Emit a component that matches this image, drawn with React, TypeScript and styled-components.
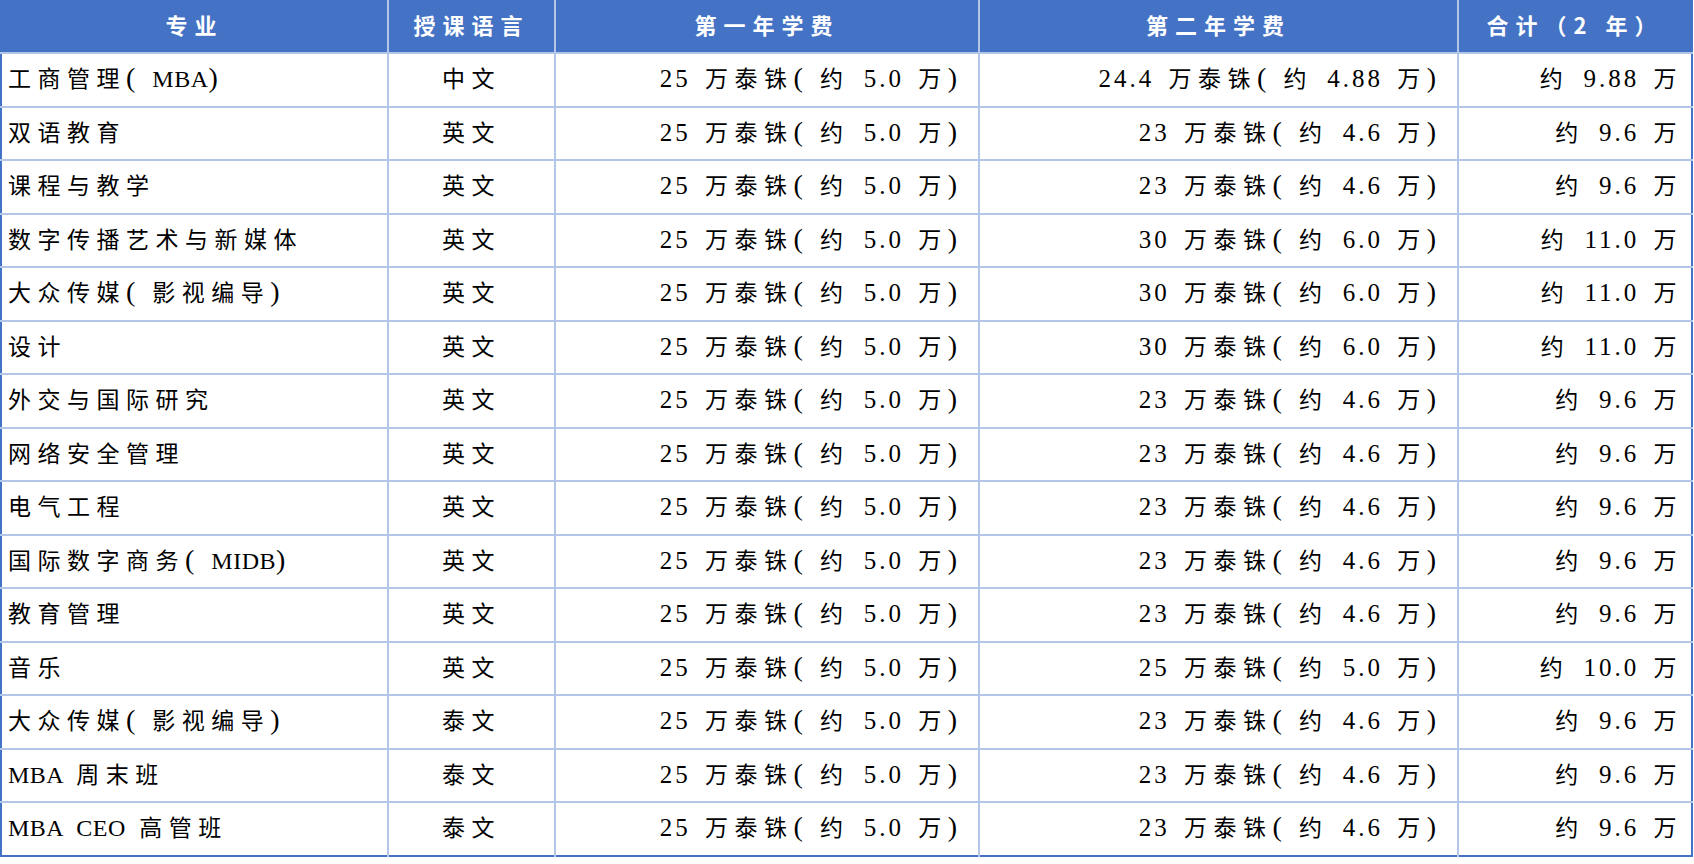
import React from "react";
import styled, { createGlobalStyle } from "styled-components";

const GlobalStyle = createGlobalStyle`
  html, body {
    margin: 0;
    padding: 0;
    background: #ffffff;
  }
  body {
    font-family: "Liberation Serif", "Noto Sans CJK SC", serif;
  }
`;

const Page = styled.div`
  width: 1694px;
  height: 864px;
  background: #ffffff;
`;

const Table = styled.table`
  width: 1691px;
  table-layout: fixed;
  border-collapse: collapse;
  border-left: 2px solid #4472c4;
  border-bottom: 2px solid #4472c4;
  border-right: 2px solid #4472c4;
`;

const HeadRow = styled.tr`
  height: 53px;
`;

const HeadCell = styled.th`
  padding: 0 0 4px 0;
  background: #4472c4;
  color: #ffffff;
  font-family: "Noto Sans CJK SC", sans-serif;
  font-weight: 700;
  font-size: 22px;
  letter-spacing: 7px;
  text-align: center;
  vertical-align: middle;
  border-left: 2px solid #b4c6e7;
  &:first-child {
    border-left: none;
  }
`;

const Row = styled.tr`
  height: 53.5px;
`;

type Align = "left" | "center" | "right";

const Cell = styled.td<{ $align: Align; $padRight: number }>`
  padding: 0 ${(p) => p.$padRight}px 5px
    ${(p) => (p.$align === "left" ? "6px" : "0")};
  border-top: 2px solid #b4c6e7;
  border-left: 2px solid #b4c6e7;
  color: #000000;
  font-family: "Liberation Serif", "Noto Sans CJK SC", serif;
  font-size: 23px;
  letter-spacing: 6.5px;
  text-align: ${(p) => p.$align};
  vertical-align: middle;
  white-space: nowrap;
  &:first-child {
    border-left: none;
  }
`;

/* Latin runs (digits, letters): taller glyphs, tighter spacing than the CJK characters */
const Latin = styled.span`
  font-size: 25px;
  letter-spacing: 3px;
  word-spacing: 5px;
`;

/* capital-letter abbreviations are set narrower in the source */
const Caps = styled.span`
  font-size: 24px;
  letter-spacing: 0.5px;
  word-spacing: 7px;
`;

/* thin, tall brackets like the source document's full-width ones */
const Paren = styled.span`
  font-size: 28px;
  letter-spacing: 3px;
  word-spacing: 4px;
`;

const columns: { title: string; width: number; align: Align; padRight: number }[] = [
  { title: "专业", width: 387, align: "left", padRight: 0 },
  { title: "授课语言", width: 167, align: "center", padRight: 0 },
  { title: "第一年学费", width: 424, align: "right", padRight: 18 },
  { title: "第二年学费", width: 479, align: "right", padRight: 18 },
  { title: "合计（2 年）", width: 234, align: "right", padRight: 8 },
];

const Y1 = "25 万泰铢( 约 5.0 万)";
const A = "23 万泰铢( 约 4.6 万)";
const B = "30 万泰铢( 约 6.0 万)";

const rows: string[][] = [
  ["工商管理( MBA)", "中文", Y1, "24.4 万泰铢( 约 4.88 万)", "约 9.88 万"],
  ["双语教育", "英文", Y1, A, "约 9.6 万"],
  ["课程与教学", "英文", Y1, A, "约 9.6 万"],
  ["数字传播艺术与新媒体", "英文", Y1, B, "约 11.0 万"],
  ["大众传媒( 影视编导)", "英文", Y1, B, "约 11.0 万"],
  ["设计", "英文", Y1, B, "约 11.0 万"],
  ["外交与国际研究", "英文", Y1, A, "约 9.6 万"],
  ["网络安全管理", "英文", Y1, A, "约 9.6 万"],
  ["电气工程", "英文", Y1, A, "约 9.6 万"],
  ["国际数字商务( MIDB)", "英文", Y1, A, "约 9.6 万"],
  ["教育管理", "英文", Y1, A, "约 9.6 万"],
  ["音乐", "英文", Y1, "25 万泰铢( 约 5.0 万)", "约 10.0 万"],
  ["大众传媒( 影视编导)", "泰文", Y1, A, "约 9.6 万"],
  ["MBA 周末班", "泰文", Y1, A, "约 9.6 万"],
  ["MBA CEO 高管班", "泰文", Y1, A, "约 9.6 万"],
];

type Kind = "cjk" | "latin" | "caps" | "paren";

const kindOf = (ch: string): Kind => {
  if (ch === "(" || ch === ")") return "paren";
  if (/[A-Z]/.test(ch)) return "caps";
  return ch.charCodeAt(0) < 0x2e80 ? "latin" : "cjk";
};

const splitRuns = (text: string) => {
  const runs: { kind: Kind; text: string }[] = [];
  for (const ch of text) {
    let kind = kindOf(ch);
    const last = runs[runs.length - 1];
    // a space stays with the bracket or abbreviation before it
    if (ch === " " && last && (last.kind === "paren" || last.kind === "caps")) kind = last.kind;
    if (last && last.kind === kind) last.text += ch;
    else runs.push({ kind, text: ch });
  }
  return runs;
};

const Mixed = ({ text }: { text: string }) => (
  <>
    {splitRuns(text).map((r, i) => {
      if (r.kind === "latin") return <Latin key={i}>{r.text}</Latin>;
      if (r.kind === "caps") return <Caps key={i}>{r.text}</Caps>;
      if (r.kind === "paren") return <Paren key={i}>{r.text}</Paren>;
      return <React.Fragment key={i}>{r.text}</React.Fragment>;
    })}
  </>
);

export default function App() {
  return (
    <Page>
      <GlobalStyle />
      <Table>
        <colgroup>
          {columns.map((c) => (
            <col key={c.title} style={{ width: c.width }} />
          ))}
        </colgroup>
        <thead>
          <HeadRow>
            {columns.map((c) => (
              <HeadCell key={c.title}>{c.title}</HeadCell>
            ))}
          </HeadRow>
        </thead>
        <tbody>
          {rows.map((r, i) => (
            <Row key={i}>
              {r.map((v, j) => (
                <Cell key={j} $align={columns[j].align} $padRight={columns[j].padRight}>
                  <Mixed text={v} />
                </Cell>
              ))}
            </Row>
          ))}
        </tbody>
      </Table>
    </Page>
  );
}
